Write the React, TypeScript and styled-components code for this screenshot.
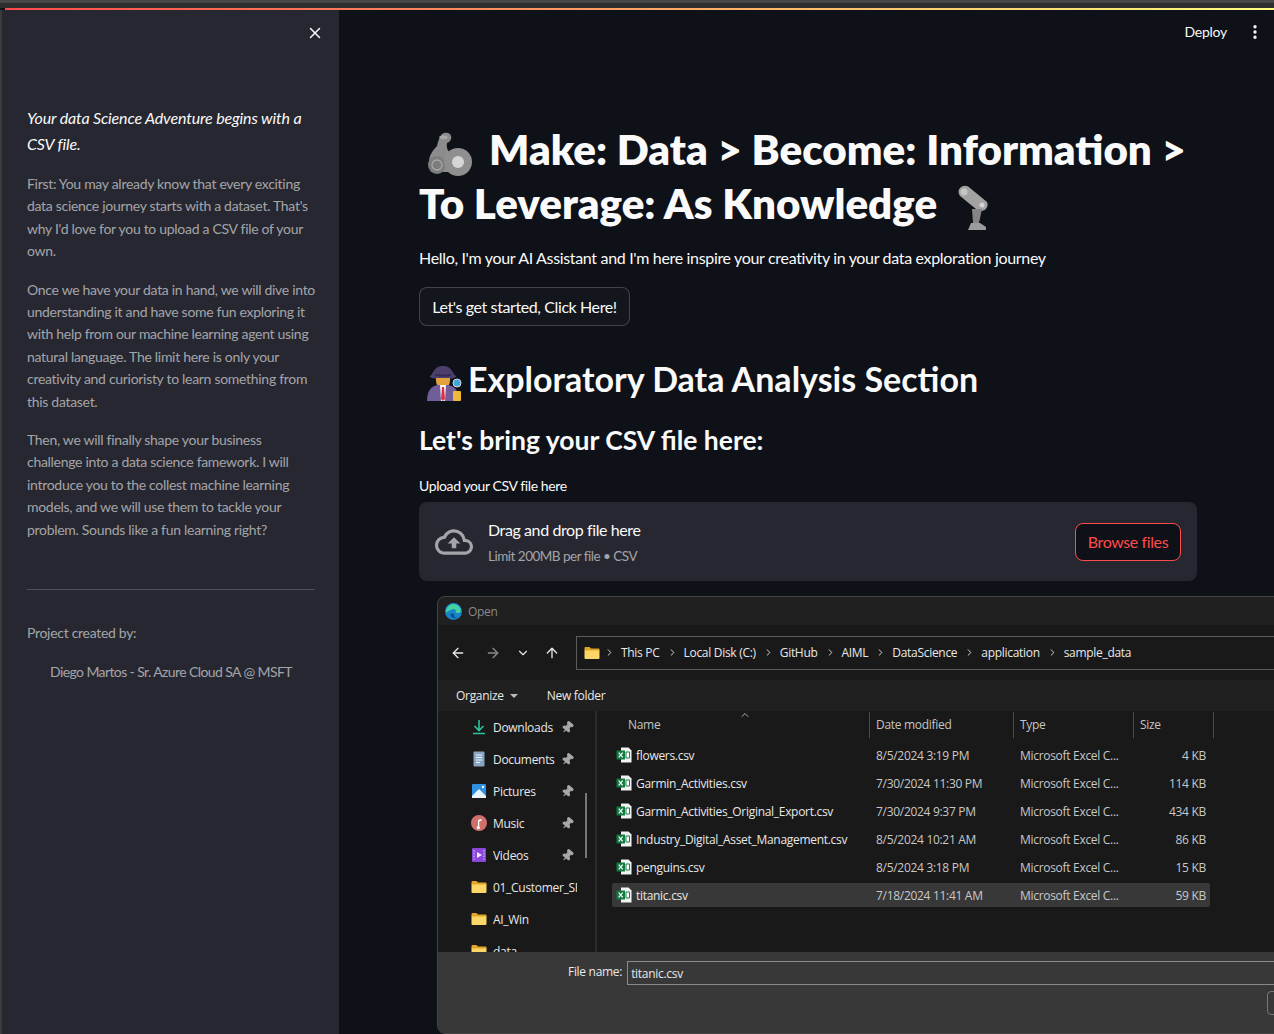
import React from 'react';
import styled, { createGlobalStyle } from 'styled-components';
import { X, EllipsisVertical, ArrowLeft, ArrowRight, ArrowUp, ChevronDown, ChevronRight, Pin } from 'lucide-react';
import { MdOutlineCloudUpload } from 'react-icons/md';

const GlobalStyle = createGlobalStyle`
  html, body {
    margin: 0;
    padding: 0;
    width: 1274px;
    height: 1034px;
    overflow: hidden;
    background: #0e1117;
  }
  * {
    box-sizing: border-box;
  }
`;

const SANS = `Lato, "Noto Sans", sans-serif`;
const WIN = `"Open Sans", "Noto Sans", sans-serif`;

const Page = styled.div`
  width: 1274px;
  height: 1034px;
  display: flex;
  flex-direction: column;
  overflow: hidden;
  background: #0e1117;
  font-family: ${SANS};
`;

const BrowserEdge = styled.div`
  height: 8px;
  flex: none;
  background: #2e2e2e;
  border-top: 3px solid #484848;
`;

const Decoration = styled.div`
  height: 2px;
  flex: none;
  margin-left: 5px;
  background: linear-gradient(90deg, #ff4b4b, #fffd80);
`;

const Body = styled.div`
  flex: 1;
  display: flex;
  min-height: 0;
`;

const BrowserLeft = styled.div`
  width: 2px;
  flex: none;
  background: #3a3a3a;
`;

const Sidebar = styled.aside`
  width: 337px;
  flex: none;
  background: #262730;
  padding: 0 24px 0 25px;
  color: rgba(250, 250, 250, 0.6);
  font-size: 14px;
  line-height: 22.4px;
  letter-spacing: -0.3px;
`;

const CloseRow = styled.div`
  height: 46px;
  display: flex;
  justify-content: flex-end;
  align-items: center;
  color: #fafafa;
  margin-right: -9px;
`;

const Lead = styled.p`
  margin: 49px 0 16px;
  font-size: 16px;
  font-style: italic;
  line-height: 26px;
  letter-spacing: -0.15px;
  color: #fafafa;
`;

const SideText = styled.p`
  margin: 0 0 16px;
`;

const SideRule = styled.hr`
  border: 0;
  border-top: 1px solid rgba(250, 250, 250, 0.2);
  margin: 48px 0 32px;
`;

const Credit = styled.p`
  margin: 14px 0 0;
  text-align: center;
  letter-spacing: -0.6px;
`;

const Main = styled.main`
  flex: 1;
  min-width: 0;
  display: flex;
  flex-direction: column;
  color: #fafafa;
  overflow: hidden;
`;

const Header = styled.header`
  height: 43px;
  flex: none;
  display: flex;
  justify-content: flex-end;
  align-items: center;
  gap: 19px;
  padding: 0 10px 0 0;
  font-size: 14px;
  letter-spacing: -0.25px;
`;

const Content = styled.div`
  padding: 0 0 0 80px;
  width: 858px;
`;

const Title = styled.h1`
  margin: 69px 0 0;
  font-size: 42.1px;
  line-height: 54px;
  font-weight: 800;
  white-space: nowrap;
  color: #fafafa;
`;

const Emoji = styled.svg<{ $left: number; $right: number }>`
  display: inline-block;
  vertical-align: middle;
  margin: -12px ${p => p.$right}px -12px ${p => p.$left}px;
`;

const Intro = styled.p`
  margin: 15px 0 0;
  font-size: 16px;
  line-height: 26px;
  letter-spacing: -0.33px;
`;

const StartButton = styled.button`
  display: block;
  margin: 16px 0 0;
  width: 211px;
  height: 39px;
  border-radius: 8px;
  border: 1px solid rgba(250, 250, 250, 0.2);
  background: #13161d;
  color: #fafafa;
  font-family: inherit;
  font-size: 16px;
  letter-spacing: -0.4px;
`;

const SectionTitle = styled.h2`
  margin: 31px 0 0;
  font-size: 34px;
  line-height: 44px;
  font-weight: 700;
  white-space: nowrap;
`;

const SubTitle = styled.h3`
  margin: 19px 0 0;
  font-size: 26.5px;
  line-height: 40px;
  font-weight: 700;
`;

const UploadLabel = styled.div`
  margin: 15px 0 0;
  font-size: 14px;
  line-height: 22px;
  letter-spacing: -0.4px;
`;

const Dropzone = styled.div`
  margin-top: 5px;
  width: 778px;
  height: 79px;
  border-radius: 8px;
  background: #262730;
  display: flex;
  align-items: center;
  padding: 0 16px;
  color: rgba(250, 250, 250, 0.6);
  letter-spacing: -0.3px;
`;

const DropText = styled.div`
  flex: 1;
  margin-left: 15px;
  padding-top: 1px;
  display: flex;
  flex-direction: column;
  gap: 3px;
`;

const DropTitle = styled.span`
  font-size: 16px;
  line-height: 24px;
  letter-spacing: -0.4px;
  color: #fafafa;
`;

const DropHint = styled.span`
  font-size: 13.5px;
  line-height: 22px;
  letter-spacing: -0.5px;
`;

const BrowseButton = styled.button`
  width: 106px;
  height: 38px;
  border-radius: 8px;
  border: 1px solid #ff4b4b;
  background: #0e1117;
  color: #ff4b4b;
  font-family: inherit;
  font-size: 16px;
  letter-spacing: -0.4px;
`;

const Dialog = styled.div`
  margin: 15px 0 0 18px;
  width: 900px;
  height: 438px;
  border: 1px solid #444;
  border-radius: 8px 0 0 8px;
  background: #202020;
  color: #e8e8e8;
  font-family: ${WIN};
  font-size: 12px;
  letter-spacing: -0.3px;
  display: flex;
  flex-direction: column;
  overflow: hidden;
`;

const DialogTitle = styled.div`
  height: 28px;
  flex: none;
  display: flex;
  align-items: center;
  gap: 6px;
  padding-left: 7px;
  color: #8a8a8a;
`;

const NavBar = styled.div`
  height: 55px;
  flex: none;
  display: flex;
  align-items: center;
  padding: 0 0 0 12px;
  background: #191919;
`;

const NavIcons = styled.div`
  display: grid;
  grid-template-columns: 35px 31px 28px 32px;
  align-items: center;
  flex: none;
`;

const AddressBar = styled.div`
  flex: 1;
  height: 34px;
  border: 1px solid #5c5c5c;
  display: flex;
  align-items: center;
  padding-left: 7px;
  gap: 6px;
  > svg:first-child {
    margin-right: -3px;
  }
`;

const CrumbSep = styled(ChevronRight)`
  margin: 0 0 0 1px;
  color: #e0e0e0;
`;

const CommandBar = styled.div`
  height: 31px;
  flex: none;
  display: flex;
  align-items: center;
  padding-left: 18px;
  gap: 29px;
  background: #202020;
`;

const Caret = styled.span`
  display: inline-block;
  width: 0;
  height: 0;
  margin-left: 6px;
  vertical-align: 2px;
  border-left: 4px solid transparent;
  border-right: 4px solid transparent;
  border-top: 4px solid #bbb;
`;

const Browser = styled.div`
  height: 241px;
  flex: none;
  display: flex;
  background: #191919;
`;

const NavPane = styled.div`
  width: 159px;
  flex: none;
  padding: 0 0 0 33px;
  position: relative;
  overflow: hidden;
  border-right: 2px solid #2b2b2b;
`;

const NavItem = styled.div`
  height: 32px;
  display: flex;
  align-items: center;
  gap: 6px;
  white-space: nowrap;
`;

const NavLabel = styled.span<{ $pinned: boolean }>`
  width: ${p => (p.$pinned ? '62px' : '84px')};
  overflow: hidden;
`;

const NavPin = styled(Pin)`
  transform: rotate(40deg);
  color: #a8a8a8;
`;

const ScrollThumb = styled.div`
  position: absolute;
  left: 147px;
  top: 82px;
  width: 2px;
  height: 65px;
  background: #777;
`;

const FilePane = styled.div`
  flex: 1;
  min-width: 0;
  padding-left: 15px;
  position: relative;
`;

const HeaderRow = styled.div`
  height: 28px;
  display: grid;
  grid-template-columns: 258px 144px 120px 80px;
  align-items: center;
  color: #c4c4c4;
`;

const HeaderCell = styled.div<{ $first?: boolean }>`
  height: 26px;
  line-height: 26px;
  padding-left: ${p => (p.$first ? '16px' : '6px')};
  border-right: 1px solid #4a4a4a;
`;

const SortMark = styled(ChevronDown)`
  position: absolute;
  left: 142px;
  top: -2px;
  transform: rotate(180deg);
  color: #aaa;
`;

const FileRow = styled.div<{ $selected?: boolean }>`
  height: 24px;
  margin-top: 4px;
  width: 598px;
  display: grid;
  grid-template-columns: 258px 144px 120px 76px;
  align-items: center;
  border-radius: 2px;
  background: ${p => (p.$selected ? '#383838' : 'transparent')};
`;

const FileName = styled.div`
  display: flex;
  align-items: center;
  gap: 4px;
  padding-left: 4px;
  white-space: nowrap;
`;

const Cell = styled.div`
  padding-left: 6px;
  color: #c8c8c8;
  white-space: nowrap;
`;

const SizeCell = styled(Cell)`
  text-align: right;
  padding: 0 4px 0 0;
`;

const NameBar = styled.div`
  flex: 1;
  background: #383838;
  display: flex;
  align-items: flex-start;
  padding: 9px 0 0 130px;
  gap: 5px;
  position: relative;
`;

const NameLabel = styled.span`
  line-height: 22px;
`;

const NameInput = styled.div`
  flex: 1;
  height: 24px;
  line-height: 24px;
  border: 1px solid #8a8a8a;
  border-right: 0;
  padding-left: 3px;
`;

const ActionStub = styled.div`
  position: absolute;
  left: 829px;
  top: 39px;
  width: 16px;
  height: 24px;
  border: 1px solid #777;
  border-radius: 4px;
`;

const ExcelIcon = () => (
  <svg width="16" height="16" viewBox="0 0 16 16">
    <path d="M5 0.5h7.5l3 3v12H5z" fill="#f2f2f2" />
    <path d="M10 5h3.5v6H10z" fill="#fff" stroke="#1f7a4d" strokeWidth="1" />
    <rect x="0.5" y="3.5" width="8.5" height="9" fill="#107c41" />
    <path d="M2.7 5.7l4 4.6M6.7 5.7l-4 4.6" stroke="#fff" strokeWidth="1.2" />
  </svg>
);

const FolderIcon = ({ size = 16 }: { size?: number }) => (
  <svg width={size} height={size} viewBox="0 0 16 16">
    <path d="M0.5 3a1 1 0 0 1 1-1h4l1.5 1.5h7.5a1 1 0 0 1 1 1V6H0.5z" fill="#e0a526" />
    <path d="M0.5 5.5h15v7.5a1 1 0 0 1-1 1h-13a1 1 0 0 1-1-1z" fill="#fcd666" />
  </svg>
);

const DownloadIcon = () => (
  <svg width="16" height="16" viewBox="0 0 16 16" fill="none" stroke="#2fc49b" strokeWidth="1.6">
    <path d="M8 1v10M3.5 7L8 11.5 12.5 7M2 14.5h12" />
  </svg>
);

const DocumentIcon = () => (
  <svg width="16" height="16" viewBox="0 0 16 16">
    <rect x="2.5" y="0.5" width="11" height="15" rx="1" fill="#8aa4c4" />
    <path d="M5 4h6M5 6.5h6M5 9h6M5 11.5h4" stroke="#eef3f9" strokeWidth="1.1" />
  </svg>
);

const PictureIcon = () => (
  <svg width="16" height="16" viewBox="0 0 16 16">
    <rect x="1" y="1" width="14" height="14" rx="1" fill="#2f8fe0" />
    <path d="M1 13l7-7 7 7v2H1z" fill="#e8f3fb" />
    <circle cx="12" cy="4" r="1.2" fill="#fff" />
  </svg>
);

const MusicIcon = () => (
  <svg width="16" height="16" viewBox="0 0 16 16">
    <circle cx="8" cy="8" r="8" fill="#d0706c" />
    <path d="M7 11V5l3.5-1v1.8L8.2 6.5V11.2a1.6 1.6 0 1 1-1.2-.2z" fill="#fff" />
  </svg>
);

const VideoIcon = () => (
  <svg width="16" height="16" viewBox="0 0 16 16">
    <rect x="1" y="1" width="14" height="14" rx="1" fill="#8a46d8" />
    <path d="M6 5l5 3-5 3z" fill="#f3e8ff" />
    <path d="M3 3v10M13 3v10" stroke="#c9a5f2" strokeWidth="1.4" strokeDasharray="1.4 1.4" />
  </svg>
);

const EdgeIcon = () => (
  <svg width="17" height="17" viewBox="0 0 16 16">
    <circle cx="8" cy="8" r="8" fill="#1a84c9" />
    <path d="M1 9a7 7 0 0 1 14-2c0 2.5-3 3-5 2 1-2-1-4-3.5-3S2.5 7.5 1 9z" fill="#43d3a0" />
    <path d="M5 10c0 3 3 5 7 4-4 0-4-3-3-4z" fill="#0d4f8b" />
  </svg>
);

const MechanicalArm = () => (
  <Emoji $left={8} $right={17} width="45" height="44" viewBox="0 0 45 44">
    <path d="M2 34c-1-9 3-15 8-20 1-4 2-9 5-12 3-2 8-2 9 2 1 3-1 6-4 7-1 5 1 9 6 12v17H9z" fill="#8c8c8c" />
    <path d="M12 5c2-2 7-2 9 0-1 3-7 3-9 0z" fill="#a8a8a8" />
    <circle cx="10" cy="33" r="9" fill="#7d7d7d" />
    <circle cx="10" cy="33" r="5" fill="none" stroke="#a8a8a8" strokeWidth="1.3" />
    <circle cx="31" cy="30" r="14" fill="#8f8f8f" />
    <circle cx="31" cy="30" r="6" fill="#d6d6d6" />
  </Emoji>
);

const MechanicalLeg = () => (
  <Emoji $left={20} $right={0} width="32" height="46" viewBox="0 0 32 46">
    <path d="M3 3c3-3 7-3 10 0l17 14c2 4-1 9-6 9-2 0-4-1-5-2L3 11C1 8 1 5 3 3z" fill="#a2a2a2" />
    <circle cx="7" cy="7" r="3.5" fill="#c6c6c6" />
    <circle cx="25" cy="20" r="2.5" fill="#d4d4d4" />
    <path d="M15 24h10l-3 14h-6z" fill="#858585" />
    <path d="M14 38h9l6 4v3H11z" fill="#9c9c9c" />
  </Emoji>
);

const Detective = () => (
  <Emoji $left={7} $right={6} width="36" height="38" viewBox="0 0 36 38">
    <path d="M4 12c3-1 4-11 13-10 9-1 10 9 13 10 1 2-4 3-13 3S3 14 4 12z" fill="#4c3f6d" />
    <path d="M9 9.5c4 1.5 12 1.5 16 0v2c-4 1.5-12 1.5-16 0z" fill="#352b50" />
    <path d="M10 14h14v3a7 7 0 0 1-14 0z" fill="#e2a33c" />
    <path d="M1 37c0-10 4-15 11-16h10c5 1 8 3 9 7l-2 9z" fill="#705e9a" />
    <path d="M14 21h6l-1 16h-4z" fill="#f4f4f4" />
    <path d="M16 23h2l1 12-2 2-2-2z" fill="#e0314b" />
    <circle cx="31" cy="19" r="4" fill="#3da5e0" stroke="#d8d8d8" />
    <rect x="27" y="27" width="8" height="10" rx="1" fill="#f0b93a" />
  </Emoji>
);

const sidebarParagraphs = [
  "First: You may already know that every exciting data science journey starts with a dataset. That's why I'd love for you to upload a CSV file of your own.",
  'Once we have your data in hand, we will dive into understanding it and have some fun exploring it with help from our machine learning agent using natural language. The limit here is only your creativity and curioristy to learn something from this dataset.',
  'Then, we will finally shape your business challenge into a data science famework. I will introduce you to the collest machine learning models, and we will use them to tackle your problem. Sounds like a fun learning right?',
];

const crumbs = ['This PC', 'Local Disk (C:)', 'GitHub', 'AIML', 'DataScience', 'application', 'sample_data'];

const places = [
  { label: 'Downloads', icon: <DownloadIcon />, pinned: true },
  { label: 'Documents', icon: <DocumentIcon />, pinned: true },
  { label: 'Pictures', icon: <PictureIcon />, pinned: true },
  { label: 'Music', icon: <MusicIcon />, pinned: true },
  { label: 'Videos', icon: <VideoIcon />, pinned: true },
  { label: '01_Customer_SF', icon: <FolderIcon />, pinned: false },
  { label: 'AI_Win', icon: <FolderIcon />, pinned: false },
  { label: 'data', icon: <FolderIcon />, pinned: false },
];

const files = [
  { name: 'flowers.csv', date: '8/5/2024 3:19 PM', size: '4 KB' },
  { name: 'Garmin_Activities.csv', date: '7/30/2024 11:30 PM', size: '114 KB' },
  { name: 'Garmin_Activities_Original_Export.csv', date: '7/30/2024 9:37 PM', size: '434 KB' },
  { name: 'Industry_Digital_Asset_Management.csv', date: '8/5/2024 10:21 AM', size: '86 KB' },
  { name: 'penguins.csv', date: '8/5/2024 3:18 PM', size: '15 KB' },
  { name: 'titanic.csv', date: '7/18/2024 11:41 AM', size: '59 KB', selected: true },
];

export default function App() {
  return (
    <Page>
      <GlobalStyle />
      <BrowserEdge />
      <Decoration />
      <Body>
        <BrowserLeft />
        <Sidebar>
          <CloseRow>
            <X size={18} strokeWidth={2} />
          </CloseRow>
          <Lead>Your data Science Adventure begins with a CSV file.</Lead>
          {sidebarParagraphs.map(text => (
            <SideText key={text}>{text}</SideText>
          ))}
          <SideRule />
          <SideText>Project created by:</SideText>
          <Credit>Diego Martos - Sr. Azure Cloud SA @ MSFT</Credit>
        </Sidebar>
        <Main>
          <Header>
            <span>Deploy</span>
            <EllipsisVertical size={18} strokeWidth={2.5} />
          </Header>
          <Content>
            <Title>
              <MechanicalArm />
              Make: Data &gt; Become: Information &gt;
              <br />
              To Leverage: As Knowledge
              <MechanicalLeg />
            </Title>
            <Intro>Hello, I'm your AI Assistant and I'm here inspire your creativity in your data exploration journey</Intro>
            <StartButton>Let's get started, Click Here!</StartButton>
            <SectionTitle>
              <Detective />
              Exploratory Data Analysis Section
            </SectionTitle>
            <SubTitle>Let's bring your CSV file here:</SubTitle>
            <UploadLabel>Upload your CSV file here</UploadLabel>
            <Dropzone>
              <MdOutlineCloudUpload size={38} />
              <DropText>
                <DropTitle>Drag and drop file here</DropTitle>
                <DropHint>Limit 200MB per file • CSV</DropHint>
              </DropText>
              <BrowseButton>Browse files</BrowseButton>
            </Dropzone>
            <Dialog>
              <DialogTitle>
                <EdgeIcon />
                Open
              </DialogTitle>
              <NavBar>
                <NavIcons>
                  <ArrowLeft size={16} />
                  <ArrowRight size={16} color="#8a8a8a" />
                  <ChevronDown size={14} />
                  <ArrowUp size={16} />
                </NavIcons>
                <AddressBar>
                  <FolderIcon />
                  {crumbs.map(crumb => (
                    <React.Fragment key={crumb}>
                      <CrumbSep size={11} />
                      <span>{crumb}</span>
                    </React.Fragment>
                  ))}
                </AddressBar>
              </NavBar>
              <CommandBar>
                <span>
                  Organize
                  <Caret />
                </span>
                <span>New folder</span>
              </CommandBar>
              <Browser>
                <NavPane>
                  {places.map(place => (
                    <NavItem key={place.label}>
                      {place.icon}
                      <NavLabel $pinned={place.pinned}>{place.label}</NavLabel>
                      {place.pinned && <NavPin size={13} fill="#a8a8a8" />}
                    </NavItem>
                  ))}
                  <ScrollThumb />
                </NavPane>
                <FilePane>
                  <SortMark size={12} />
                  <HeaderRow>
                    <HeaderCell $first>Name</HeaderCell>
                    <HeaderCell>Date modified</HeaderCell>
                    <HeaderCell>Type</HeaderCell>
                    <HeaderCell>Size</HeaderCell>
                  </HeaderRow>
                  {files.map(file => (
                    <FileRow key={file.name} $selected={file.selected}>
                      <FileName>
                        <ExcelIcon />
                        {file.name}
                      </FileName>
                      <Cell>{file.date}</Cell>
                      <Cell>Microsoft Excel C...</Cell>
                      <SizeCell>{file.size}</SizeCell>
                    </FileRow>
                  ))}
                </FilePane>
              </Browser>
              <NameBar>
                <NameLabel>File name:</NameLabel>
                <NameInput>titanic.csv</NameInput>
                <ActionStub />
              </NameBar>
            </Dialog>
          </Content>
        </Main>
      </Body>
    </Page>
  );
}
